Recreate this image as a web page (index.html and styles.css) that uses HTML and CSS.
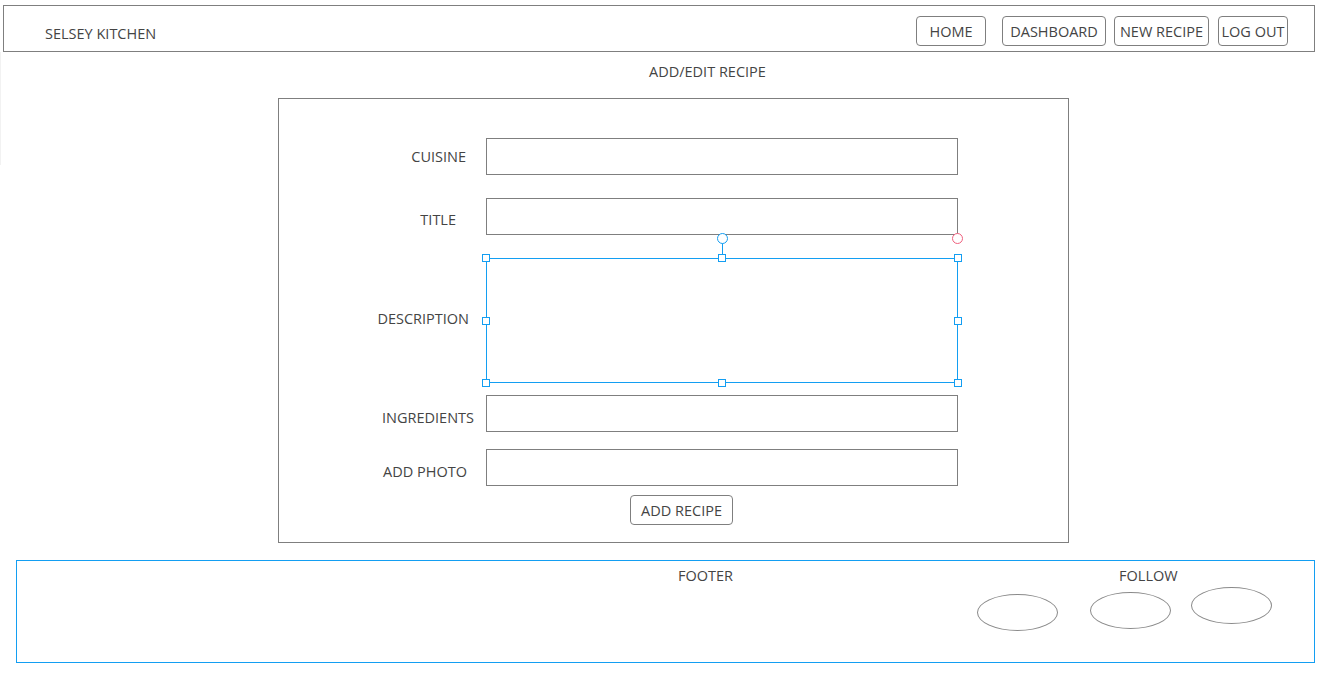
FILE: index.html
```html
<!DOCTYPE html>
<html>
<head>
<meta charset="utf-8">
<title>Selsey Kitchen - Add/Edit Recipe</title>
<link rel="stylesheet" href="styles.css">
</head>
<body>
<div class="page-edge"></div>
<header class="topbar">
  <div class="brand">SELSEY KITCHEN</div>
  <nav class="nav">
    <a class="btn btn-home">HOME</a>
    <a class="btn btn-dash">DASHBOARD</a>
    <a class="btn btn-new">NEW RECIPE</a>
    <a class="btn btn-out">LOG OUT</a>
  </nav>
</header>

<h1 class="page-title">ADD/EDIT RECIPE</h1>

<form class="recipe-form">
  <div class="row row-cuisine">
    <label class="lbl lbl-cuisine">CUISINE</label>
    <div class="field"></div>
  </div>
  <div class="row row-title">
    <label class="lbl lbl-title">TITLE</label>
    <div class="field"></div>
  </div>
  <div class="row row-desc">
    <label class="lbl lbl-desc">DESCRIPTION</label>
    <div class="field field-desc">
      <span class="rot-line"></span>
      <span class="rot-handle"></span>
      <span class="link-handle"></span>
      <span class="h h-tl"></span><span class="h h-tm"></span><span class="h h-tr"></span>
      <span class="h h-ml"></span><span class="h h-mr"></span>
      <span class="h h-bl"></span><span class="h h-bm"></span><span class="h h-br"></span>
    </div>
  </div>
  <div class="row row-ingr">
    <label class="lbl lbl-ingr">INGREDIENTS</label>
    <div class="field"></div>
  </div>
  <div class="row row-photo">
    <label class="lbl lbl-photo">ADD PHOTO</label>
    <div class="field"></div>
  </div>
  <div class="submit-row">
    <a class="btn btn-add">ADD RECIPE</a>
  </div>
</form>

<footer class="footer">
  <div class="footer-label">FOOTER</div>
  <div class="follow">
    <div class="follow-label">FOLLOW</div>
    <div class="socials">
      <span class="oval oval-1"></span>
      <span class="oval oval-2"></span>
      <span class="oval oval-3"></span>
    </div>
  </div>
</footer>
</body>
</html>
```
FILE: styles.css
```css
* { box-sizing: border-box; }

html, body {
  margin: 0;
  padding: 0;
  background: #ffffff;
}

body {
  font-family: "Open Sans", "Noto Sans", "Liberation Sans", sans-serif;
  font-size: 14.5px;
  color: #444444;
  width: 1329px;
  height: 675px;
  overflow: hidden;
  position: relative;
  padding-top: 5px;
}

.page-edge {
  position: absolute;
  left: 0;
  top: 52px;
  width: 1px;
  height: 113px;
  background: #f2f2f2;
}

/* Header */
.topbar {
  margin-left: 3px;
  width: 1312px;
  height: 47px;
  border: 1px solid #7f7f7f;
  display: flex;
  align-items: flex-start;
  justify-content: space-between;
}

.brand {
  margin-left: 41px;
  margin-top: 18px;
  line-height: 20px;
  white-space: nowrap;
}

.nav {
  display: flex;
  margin-top: 10px;
  margin-right: 26px;
}

.btn {
  display: flex;
  align-items: center;
  justify-content: center;
  height: 30px;
  border: 1px solid #7f7f7f;
  border-radius: 4px;
  color: #444444;
  white-space: nowrap;
  padding-top: 0;
}

.btn-home { width: 70px; }
.btn-dash { width: 104px; margin-left: 16px; }
.btn-new  { width: 95px;  margin-left: 8px; }
.btn-out  { width: 70px;  margin-left: 9px; }

/* Title */
.page-title {
  margin: 0;
  font-weight: normal;
  font-size: 14.5px;
  line-height: 20px;
  margin-top: 10px;
  padding-left: 649px;
}

/* Form */
.recipe-form {
  margin: 16px 0 0 278px;
  width: 791px;
  height: 445px;
  border: 1px solid #7f7f7f;
  padding-top: 39px;
  display: flex;
  flex-direction: column;
}

.row {
  display: flex;
  align-items: center;
}

.row-title { margin-top: 23px; }
.row-desc  { margin-top: 23px; }
.row-ingr  { margin-top: 12px; }
.row-photo { margin-top: 17px; }

.lbl {
  width: 207px;
  text-align: right;
  padding-top: 2px;
  white-space: nowrap;
  line-height: 20px;
}

.lbl-cuisine { padding-right: 20px; padding-top: 0; }
.lbl-title   { padding-right: 30px; padding-top: 7px; }
.lbl-desc    { padding-right: 17px; padding-top: 0; margin-top: -3px; }
.lbl-ingr    { padding-right: 12px; padding-top: 8px; }
.lbl-photo   { padding-right: 19px; padding-top: 8px; }

.field {
  width: 472px;
  height: 37px;
  border: 1px solid #7f7f7f;
  background: #fff;
}

.field-desc {
  position: relative;
  height: 125px;
  border-color: #139ef2;
}

.h {
  position: absolute;
  width: 8px;
  height: 8px;
  border: 1px solid #139ef2;
  background: #fff;
}

.h-tl { left: -5px; top: -5px; }
.h-tm { left: 231px; top: -5px; }
.h-tr { right: -5px; top: -5px; }
.h-ml { left: -5px; top: 58px; }
.h-mr { right: -5px; top: 58px; }
.h-bl { left: -5px; bottom: -5px; }
.h-bm { left: 231px; bottom: -5px; }
.h-br { right: -5px; bottom: -5px; }

.rot-line {
  position: absolute;
  left: 235px;
  top: -16px;
  width: 1px;
  height: 12px;
  background: #139ef2;
}

.rot-handle {
  position: absolute;
  left: 230px;
  top: -26px;
  width: 11px;
  height: 11px;
  border: 1px solid #139ef2;
  border-radius: 50%;
  background: #fff;
}

.link-handle {
  position: absolute;
  right: -6px;
  top: -26px;
  width: 11px;
  height: 11px;
  border: 1px solid #f0607e;
  border-radius: 50%;
  background: #fff;
}

.submit-row {
  display: flex;
  margin-top: 9px;
  padding-left: 351px;
}

.btn-add { width: 103px; }

/* Footer */
.footer {
  margin: 17px 0 0 16px;
  width: 1299px;
  height: 103px;
  border: 1px solid #139ef2;
  display: flex;
  align-items: flex-start;
}

.footer-label {
  margin-left: 661px;
  margin-top: 5px;
  line-height: 20px;
}

.follow {
  margin-left: 244px;
  margin-top: 5px;
  display: flex;
  flex-direction: column;
}

.follow-label {
  margin-left: 142px;
  line-height: 20px;
}

.socials {
  display: flex;
  align-items: flex-start;
}

.oval {
  display: block;
  width: 81px;
  height: 37px;
  border: 1px solid #8a8a8a;
  border-radius: 50%;
}

.oval-1 { margin-top: 8px; }
.oval-2 { margin-top: 6px; margin-left: 32px; }
.oval-3 { margin-top: 1px; margin-left: 20px; }
```
